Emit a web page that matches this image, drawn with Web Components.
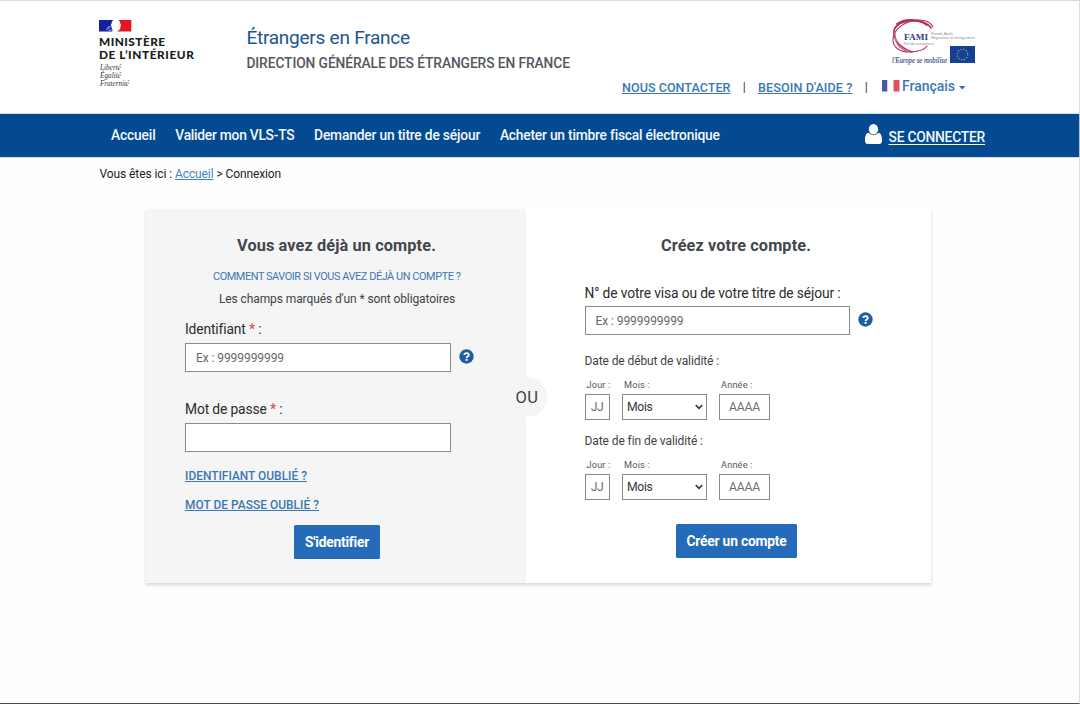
<!DOCTYPE html>
<html lang="fr">
<head>
<meta charset="utf-8">
<title>Étrangers en France - Connexion</title>
<style>
html, body { margin: 0; height: 100%; }
body { font-family: Roboto, "Liberation Sans", sans-serif; background: #fefefe; color: #3f4247; overflow: hidden; }
</style>
</head>
<body>
<portal-page></portal-page>
<script>
const define = (name, html, extra) => {
  const tpl = document.createElement('template');
  tpl.innerHTML = html;
  customElements.define(name, class extends HTMLElement {
    connectedCallback() {
      if (this.shadowRoot) return;
      this.attachShadow({ mode: 'open' }).append(tpl.content.cloneNode(true));
      if (extra) extra(this, this.shadowRoot);
    }
  });
};

define('portal-page', `
<style>
:host { display: flex; flex-direction: column; box-sizing: border-box; height: 704px; border-top: 1px solid #d9d9d9; border-right: 1px solid #dcdcdc; border-bottom: 1px solid #4a4a4a; }
</style>
<site-header></site-header>
<nav-bar></nav-bar>
<bread-crumb></bread-crumb>
<account-card></account-card>`);

define('site-header', `
<style>
:host { display: flex; box-sizing: border-box; height: 113px; padding-left: 99px; background: #fff; }
gov-logo { width: 147.4px; }
.titles { width: 330px; padding-top: 25px; display: flex; flex-direction: column; }
.titles text-line { display: block; }
.t1 { font-size: 19px; line-height: 24px; color: #1c5590; }
.t2 { font-size: 13.8px; font-weight: 500; line-height: 20px; margin-top: 3px; color: #55575b; }
.right { flex: 1; display: flex; flex-direction: column; align-items: flex-end; }
fami-logo { margin: 14px 99px 0 0; }
.links { display: flex; width: 457px; margin-top: 6px; height: 20px; align-items: center; font-weight: 500; font-size: 12.6px; color: #3a78b5; }
.links u { text-underline-offset: 1px; }
.sep { color: #444; font-size: 12px; width: 27.5px; text-align: center; }
.low { position: relative; top: 1px; }
svg { display: block; }
.fr { font-size: 14px; margin-left: 2px; }
</style>
<gov-logo></gov-logo>
<div class="titles">
  <text-line class="t1" measure="163.5">Étrangers en France</text-line>
  <text-line class="t2" measure="323.5">DIRECTION GÉNÉRALE DES ÉTRANGERS EN FRANCE</text-line>
</div>
<div class="right">
  <fami-logo></fami-logo>
  <div class="links">
    <text-line class="low" measure="108.5"><u>NOUS CONTACTER</u></text-line><span class="sep low">|</span>
    <text-line class="low" measure="94.5"><u>BESOIN D'AIDE ?</u></text-line><span class="sep low">|</span>
    <svg style="margin-left:2px" width="18" height="12" viewBox="0 0 18 12"><rect width="5.5" height="11.5" fill="#4a55a5"/><rect x="5.5" width="6" height="11.5" fill="#fbfbfb"/><rect x="11.5" width="6" height="11.5" fill="#e4515e"/></svg>
    <text-line class="fr" measure="53">Français</text-line>
    <svg style="margin:3px 0 0 3.5px" width="7" height="4" viewBox="0 0 7 4"><path d="M0 0h6.5L3.25 3.4z" fill="#3a6a98"/></svg>
  </div>
</div>`);

define('gov-logo', `
<style>
:host { display: flex; flex-direction: column; align-items: flex-start; padding-top: 19px; }
svg { display: block; }
.m { font: 900 11.8px/13px Lato, "Open Sans", sans-serif; color: #1c1c1c; }
.m.first { margin-top: 3px; }
.d { font: italic 7.2px/7.8px "Liberation Serif", serif; color: #333; margin-left: 1px; }
.d.first { margin-top: 4.3px; }
</style>
<svg width="33" height="12" viewBox="0 0 33 12">
  <path d="M0 0H14.5C13 1 12.5 2.2 12.6 3.6L11.6 5.3l1 .7-.3 1.4c.8.6 1.3 1.7 1.1 4.1H0z" fill="#14209c"/>
  <path d="M19.6 0H32.3V11.5H18.3c.9-1 2.9-1.5 3.1-3.4.1-1.4 0-2.2.6-3C20.9 3 21.2 1.2 19.6 0z" fill="#e3161f"/>
  <path d="M7 9.5c1.3-.2 2.3-1.2 3.5-1.6M8.3 7.3c1.2.2 2.2-.9 3.6-.6M9.5 10.5c1.2 0 2-.7 3.6-.7" stroke="#c9cdf0" stroke-width=".8" fill="none"/>
</svg>
<text-line class="m first" measure="66.5">MINISTÈRE</text-line>
<text-line class="m" measure="95.5">DE L’INTÉRIEUR</text-line>
<text-line class="d first" measure="21">Liberté</text-line>
<text-line class="d" measure="21">Égalité</text-line>
<text-line class="d" measure="29">Fraternité</text-line>`);

define('fami-logo', `
<style>:host, svg { display: block; }</style>
<svg width="95" height="55" viewBox="0 0 95 55">
  <g fill="none" stroke="#b0305f" stroke-linecap="round">
    <path d="M46 13C43 8 35 5 25 6C14 7 8 12 9 19C10 26 16 33 27 37" stroke-width="1.7"/>
    <path d="M48 12C45 6 36 3.5 27 6C15 9 8 17 8 25C8 33 16 37.5 26 37C34 36.5 40 34 42 31" stroke-width="1.1"/>
    <path d="M12 9C20 3 34 4 42 10" stroke-width="2"/>
    <path d="M10 19C10 28 15 34 23 36" stroke-width="1.5" stroke="#c26b8c"/>
  </g>
  <text x="19" y="24.5" font-family="Liberation Serif, serif" font-weight="700" font-size="9" textLength="24" lengthAdjust="spacingAndGlyphs" fill="#35407e">FAMI</text>
  <g font-family="Liberation Sans, sans-serif" fill="#8d90a6">
    <text x="46" y="19.5" font-size="3.8" textLength="23" lengthAdjust="spacingAndGlyphs">Fonds Asile,</text>
    <text x="46" y="23.5" font-size="3.8" textLength="44" lengthAdjust="spacingAndGlyphs">Migration et Intégration</text>
    <text x="19" y="30" font-size="3.4" textLength="30" lengthAdjust="spacingAndGlyphs" fill="#a58aa6">Fonds européens</text>
  </g>
  <text x="7" y="47.5" font-family="Liberation Serif, serif" font-style="italic" font-size="7.4" textLength="55" lengthAdjust="spacingAndGlyphs" fill="#414b8e" stroke="#414b8e" stroke-width=".15">l'Europe se mobilise</text>
  <rect x="65" y="31" width="25" height="17" fill="#164193"/>
  <circle cx="77.5" cy="39.5" r="5.3" fill="none" stroke="#9fb08c" stroke-width="1.1" stroke-dasharray="1.2 1.575"/>
</svg>`);

define('nav-bar', `
<style>
:host { display: flex; align-items: center; box-sizing: border-box; height: 43px; padding: 0 94px 2px 111px; background: #034a91; color: #f4f8fc; font-size: 13.8px; font-weight: 500; box-shadow: 0 0 1px #034a91; }
.items { display: flex; gap: 19.8px; flex: 1; }
.login { display: flex; align-items: center; gap: 7px; }
.login text-line { padding-top: 4px; }
u { text-underline-offset: 1.5px; }
svg { display: block; margin-top: -1px; }
</style>
<div class="items">
  <text-line measure="44.5">Accueil</text-line>
  <text-line measure="119">Valider mon VLS-TS</text-line>
  <text-line measure="166">Demander un titre de séjour</text-line>
  <text-line measure="219.5">Acheter un timbre fiscal électronique</text-line>
</div>
<div class="login">
  <svg width="17" height="20" viewBox="0 0 17 20"><path d="M8.5 0a4.7 5.2 0 0 1 0 10.4A4.7 5.2 0 0 1 8.5 0zM3.7 8.8c2.6 3.1 7 3.1 9.6 0C16 9.2 17 12 17 15.5V17q0 3-3 3H3q-3 0-3-3v-1.5C0 12 1 9.2 3.7 8.8z" fill="#fff"/></svg>
  <text-line measure="96.5"><u>SE CONNECTER</u></text-line>
</div>`);

define('bread-crumb', `
<style>
:host { display: flex; align-items: center; gap: 3px; height: 34px; padding-left: 99.5px; font-size: 12px; color: #1c1c1c; }
u { color: #4287c4; }
</style>
<text-line measure="72.5">Vous êtes ici :</text-line>
<text-line measure="38.5"><u>Accueil</u></text-line>
<text-line measure="64.5">&gt; Connexion</text-line>`);

define('account-card', `
<style>
:host { display: flex; position: relative; width: 785px; height: 374px; margin: 18px 0 0 146px; background: #fff; box-shadow: 0 2px 3px rgba(0,0,0,.17); }
.pane { box-sizing: border-box; padding: 27px 0 0 39px; display: flex; flex-direction: column; align-items: flex-start; }
.left { width: 380px; background: #f5f5f5; }
.right { width: 405px; padding-left: 58.5px; }
.h { font-size: 16.3px; font-weight: 700; line-height: 20px; color: #43464b; }
.left .h { margin-left: 52px; }
.right .h { margin-left: 76.5px; }
.how { font-size: 10.9px; line-height: 16px; color: #3b77b3; margin: 13px 0 0 28px; }
.note { font-size: 12px; line-height: 16px; margin: 6px 0 0 34px; }
.forgot { font-size: 11.9px; line-height: 16px; font-weight: 500; color: #3b77b3; }
.forgot u { text-underline-offset: 1px; }
.or { position: absolute; left: 361px; top: 168px; width: 40px; height: 40px; border-radius: 50%; background: #f5f5f6; font-size: 16.5px; display: flex; align-items: center; justify-content: center; color: #3f4247; }
.right form-field { --field-width: 265.4px; }
</style>
<div class="pane left">
  <text-line class="h" measure="199">Vous avez déjà un compte.</text-line>
  <text-line class="how" measure="247.5">COMMENT SAVOIR SI VOUS AVEZ DÉJÀ UN COMPTE ?</text-line>
  <text-line class="note" measure="236">Les champs marqués d'un * sont obligatoires</text-line>
  <form-field style="margin-top:13px" label="Identifiant" required measure="76" hint="Ex : 9999999999" help></form-field>
  <form-field style="margin-top:28px" label="Mot de passe" required measure="97.5"></form-field>
  <text-line class="forgot" style="margin-top:16px" measure="122"><u>IDENTIFIANT OUBLIÉ ?</u></text-line>
  <text-line class="forgot" style="margin-top:13px" measure="134"><u>MOT DE PASSE OUBLIÉ ?</u></text-line>
  <action-button style="margin:12px 0 0 109px;width:86px"><text-line measure="64">S'identifier</text-line></action-button>
</div>
<div class="pane right">
  <text-line class="h" measure="150">Créez votre compte.</text-line>
  <form-field style="margin-top:28px;--label-gap:4px" label="N° de votre visa ou de votre titre de séjour :" measure="256" hint="Ex : 9999999999" help></form-field>
  <date-field style="margin-top:18px" label="Date de début de validité :" measure="134.5"></date-field>
  <date-field style="margin-top:13px" label="Date de fin de validité :" measure="118"></date-field>
  <action-button style="margin:24px 0 0 91.5px;width:121px"><text-line measure="100">Créer un compte</text-line></action-button>
</div>
<div class="or"><text-line measure="23">OU</text-line></div>`);

define('form-field', `
<style>
:host { display: block; }
.label { display: block; font-size: 13.8px; line-height: 18px; color: #2b2b2d; }
.label i { font-style: normal; color: #d9534f; font-weight: 500; }
.row { display: flex; align-items: center; gap: 8px; margin-top: var(--label-gap, 5px); }
.box { box-sizing: border-box; width: var(--field-width, 266px); height: 29px; padding-left: 10px; border: 1px solid #8a8a8a; background: #fff; display: flex; align-items: center; font-size: 12px; color: #66686b; }
</style>
<text-line class="label"></text-line>
<div class="row"><div class="box"></div></div>`, (host, root) => {
  const label = root.querySelector('.label');
  label.setAttribute('measure', host.getAttribute('measure'));
  label.append(host.getAttribute('label'));
  if (host.hasAttribute('required')) {
    const star = document.createElement('i');
    star.textContent = '*';
    label.append(' ', star, ' :');
  }
  if (host.hasAttribute('hint')) {
    const hint = document.createElement('text-line');
    hint.setAttribute('measure', '88');
    hint.textContent = host.getAttribute('hint');
    root.querySelector('.box').append(hint);
  }
  if (host.hasAttribute('help')) root.querySelector('.row').append(document.createElement('help-icon'));
});

define('help-icon', `
<style>:host, svg { display: block; margin-top: -1px; }</style>
<svg width="15" height="15" viewBox="0 0 15 15"><circle cx="7.5" cy="7.5" r="7.2" fill="#1f5da3"/><path d="M5.3 5.9C5.4 3.5 9.8 3.5 9.8 5.9C9.8 7.4 7.6 7.3 7.6 9" fill="none" stroke="#fff" stroke-width="1.9"/><rect x="6.6" y="9.9" width="2" height="1.9" fill="#fff"/></svg>`);

define('date-field', `
<style>
:host { display: block; }
.title { display: block; font-size: 12px; line-height: 16px; }
.row { display: flex; margin-top: 10px; gap: 12.5px; }
.cap { display: block; font-size: 9.2px; line-height: 12px; padding-left: 2px; color: #55575b; }
.box { box-sizing: border-box; height: 26px; margin-top: 3px; border: 1px solid #8a8a8a; background: #fff; display: flex; align-items: center; justify-content: center; font-size: 12.2px; color: #6c6e71; }
.day { width: 25px; } .month { width: 84.5px; } .year { width: 51px; }
.month .box { justify-content: space-between; padding: 0 3px 0 4px; color: #33363a; }
svg { display: block; }
</style>
<text-line class="title"></text-line>
<div class="row">
  <div class="day"><text-line class="cap" measure="24">Jour :</text-line><div class="box"><text-line measure="12.5">JJ</text-line></div></div>
  <div class="month"><text-line class="cap" measure="26">Mois :</text-line><div class="box"><text-line measure="25.5">Mois</text-line><svg width="8" height="6" viewBox="0 0 8 6"><path d="M.7 1.2L4 4.3 7.3 1.2" fill="none" stroke="#3c3c3c" stroke-width="1.6"/></svg></div></div>
  <div class="year"><text-line class="cap" measure="31.5">Année :</text-line><div class="box"><text-line measure="31">AAAA</text-line></div></div>
</div>`, (host, root) => {
  const title = root.querySelector('.title');
  title.setAttribute('measure', host.getAttribute('measure'));
  title.textContent = host.getAttribute('label');
});

define('action-button', `
<style>:host { display: flex; align-items: center; justify-content: center; height: 33.5px; border-radius: 1.5px; background: #266bb9; color: #fff; font-size: 13.8px; font-weight: 700; }</style>
<slot></slot>`);

/* One unwrapped line, tracked so that it spans its measure in pixels.
   Registered last, once every ancestor has been rendered. */
define('text-line', `
<style>:host { display: inline-block; white-space: nowrap; }</style>
<span><slot></slot></span>`, (host, root) => {
  const span = root.querySelector('span');
  const width = span.getBoundingClientRect().width;
  const measure = parseFloat(host.getAttribute('measure'));
  const count = host.textContent.length;
  if (width && measure) span.style.letterSpacing = (measure - width) / count + 'px';
});
</script>
</body>
</html>
